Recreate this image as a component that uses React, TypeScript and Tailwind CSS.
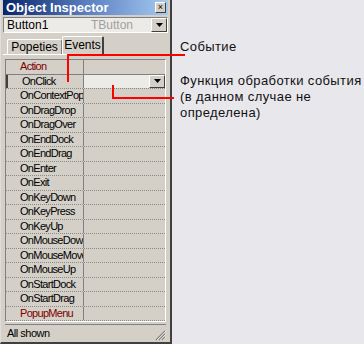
const events = [
  'OnClick',
  'OnContextPopup',
  'OnDragDrop',
  'OnDragOver',
  'OnEndDock',
  'OnEndDrag',
  'OnEnter',
  'OnExit',
  'OnKeyDown',
  'OnKeyPress',
  'OnKeyUp',
  'OnMouseDown',
  'OnMouseMove',
  'OnMouseUp',
  'OnStartDock',
  'OnStartDrag',
];

function DropButton() {
  return (
    <div className="flex h-full w-[16px] items-center justify-center border border-t-white border-l-white border-r-[#404040] border-b-[#404040] bg-[#d4d0c8]">
      <svg width="7" height="4" viewBox="0 0 7 4">
        <path d="M0 0h7L3.5 4z" fill="#000" />
      </svg>
    </div>
  );
}

function Row({ name, red, selected }: { name: string; red?: boolean; selected?: boolean }) {
  return (
    <div className="flex h-[14.5px] border-b border-dotted border-[#8a8a8a]">
      <div
        className={`flex w-[78px] items-center overflow-hidden whitespace-nowrap border-r border-r-[#808080] pl-[14px] ${
          selected ? 'border-l-2 border-l-[#404040] pl-[12px]' : ''
        } ${red ? 'text-[#800000]' : 'text-black'}`}
      >
        {name}
      </div>
      <div className={`flex flex-1 justify-end ${selected ? 'bg-[#ecebe8]' : ''}`}>
        {selected && <DropButton />}
      </div>
    </div>
  );
}

export default function App() {
  return (
    <div className="relative flex h-[344px] w-[364px] overflow-hidden bg-[#e8e8ec] font-['Liberation_Sans',Arial,sans-serif] text-[11px] leading-none">
      <div className="flex h-[344px] w-[172px] shrink-0 flex-col border-l border-l-[#e0ded8] border-r-2 border-r-[#404040] border-b-2 border-b-[#404040] bg-[#d4d0c8] pl-[2px] pr-[2px]">
        <div className="flex h-[16px] items-center justify-between bg-gradient-to-r from-[#0a246a] via-[#5a7ec0] to-[#a6caf0] pl-[3px] pr-[2px]">
          <span className="text-[13px] font-bold text-white">Object Inspector</span>
          <div className="flex h-[11px] w-[11px] items-center justify-center border border-t-white border-l-white border-r-[#404040] border-b-[#404040] bg-[#d4d0c8] text-[9px] leading-none text-black">
            ×
          </div>
        </div>

        <div className="mt-[2px] flex h-[17px] items-stretch border border-t-[#808080] border-l-[#808080] border-r-white border-b-white bg-[#ecebe8]">
          <div className="flex flex-1 items-center pl-[3px] text-[12px]">
            <span className="w-[84px] text-black">Button1</span>
            <span className="text-[#a0a0a0]">TButton</span>
          </div>
          <DropButton />
        </div>

        <div className="mt-[3px] flex h-[18px] items-end pl-[4px] text-[12px]">
          <div className="flex h-[15px] w-[55px] items-center justify-center rounded-t-[2px] border border-b-0 border-t-white border-l-white border-r-[#808080] text-black">
            Popeties
          </div>
          <div className="flex h-[18px] w-[42px] items-center justify-center rounded-t-[2px] border border-b-0 border-t-white border-l-white border-r-2 border-r-[#404040] pb-[2px] text-black">
            Events
          </div>
        </div>

        <div className="flex flex-1 flex-col border-t border-t-white px-[2px] pt-[4px]">
          <div className="flex flex-1 flex-col border border-t-[#808080] border-l-[#808080] border-r-white border-b-white text-[11px] tracking-[-0.7px]">
            <div className="flex h-[14.5px] border-b border-b-[#808080]">
              <div className="flex w-[78px] items-center border-r border-r-[#808080] pl-[14px] text-[#800000]">
                Action
              </div>
              <div className="flex-1" />
            </div>
            {events.map((e, i) => (
              <Row key={e} name={e} selected={i === 0} />
            ))}
            <Row name="PopupMenu" red />
            <div className="flex flex-1">
              <div className="w-[78px] border-r border-r-[#808080]" />
            </div>
          </div>
          <div className="mt-[2px] flex h-[18px] items-center justify-between border-t border-t-[#808080] pl-[2px] text-black">
            <span className="text-[11px] tracking-[-0.5px]">All shown</span>
            <svg width="11" height="11" viewBox="0 0 11 11" className="mb-[-4px]">
              <path d="M10 1L1 10M10 4L4 10M10 7L7 10" stroke="#808080" strokeWidth="1.2" />
              <path d="M11 1L2 10M11 4L5 10M11 7L8 10" stroke="#fff" strokeWidth="0.6" />
            </svg>
          </div>
        </div>
      </div>

      <div className="flex flex-col pl-[8px] pt-[39px] text-[13px] leading-[16px] tracking-[0.4px] text-[#111]">
        <p>Событие</p>
        <p className="mt-[18px]">
          Функция обработки события
          <br />
          (в данном случае не
          <br />
          определена)
        </p>
      </div>

      <div className="pointer-events-none absolute left-[67px] top-[54px] h-[2px] w-[118px] bg-[#ff0000]" />
      <div className="pointer-events-none absolute left-[67px] top-[54px] h-[28px] w-[2px] bg-[#ff0000]" />
      <div className="pointer-events-none absolute left-[112px] top-[97px] h-[2px] w-[62px] bg-[#ff0000]" />
      <div className="pointer-events-none absolute left-[112px] top-[85px] h-[14px] w-[2px] bg-[#ff0000]" />
    </div>
  );
}
